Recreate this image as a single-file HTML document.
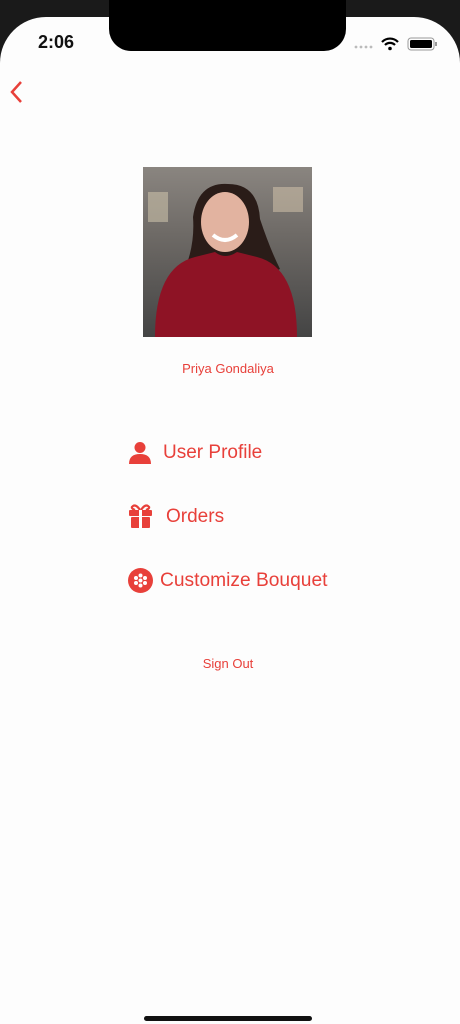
<!DOCTYPE html>
<html><head><meta charset="utf-8"><style>
html,body{margin:0;padding:0;height:1024px;overflow:hidden}
body{width:460px;height:1024px;background:#1a1a1a;position:relative;overflow:hidden;font-family:"Liberation Sans",sans-serif}
.screen{position:absolute;left:0;width:460px;height:1007px;background:#fdfdfd;border-radius:46px 46px 0 0;top:17px}
.notch{position:absolute;left:109px;top:0;width:237px;height:51px;background:#000;border-radius:0 0 22px 22px}
.time{position:absolute;left:38px;top:32px;font-size:18px;font-weight:bold;color:#111}
.t{position:absolute;color:#e8403a;white-space:nowrap}
</style></head><body>
<div class="screen"></div>
<div class="notch"></div>
<div class="time">2:06</div>
<svg style="position:absolute;left:354px;top:36px" width="84" height="16">
<g fill="#bbb"><circle cx="2" cy="11" r="1.4"/><circle cx="7" cy="11" r="1.4"/><circle cx="12" cy="11" r="1.4"/><circle cx="17" cy="11" r="1.4"/></g>
<path d="M28 6a11 11 0 0 1 16 0M31 9a7 7 0 0 1 10 0" stroke="#000" stroke-width="2.2" fill="none"/><circle cx="36" cy="12.5" r="1.8"/>
<rect x="54" y="2" width="26" height="12" rx="3" fill="none" stroke="#999" stroke-width="1"/>
<rect x="56" y="4" width="22" height="8" rx="1.5" fill="#000"/><rect x="81" y="6" width="2" height="4" fill="#999"/>
</svg>
<svg style="position:absolute;left:8px;top:80px" width="16" height="24"><path d="M13 2L4 12l9 10" stroke="#e8403a" stroke-width="2.5" fill="none"/></svg>
<svg style="position:absolute;left:143px;top:167px" width="169" height="170">
<defs><linearGradient id="bg" x1="0" y1="0" x2="0" y2="1"><stop offset="0" stop-color="#8a8580"/><stop offset=".4" stop-color="#6e6a66"/><stop offset="1" stop-color="#444"/></linearGradient></defs>
<rect width="169" height="170" fill="url(#bg)"/>
<rect x="5" y="25" width="20" height="30" fill="#c9bfa9" opacity=".6"/>
<rect x="130" y="20" width="30" height="25" fill="#d9c9b0" opacity=".5"/>
<path d="M50 50q5-35 35-33q30 0 32 35q10 30 20 50l-20 10l-60 0l-15-10q10-25 8-52z" fill="#2a1c18"/>
<ellipse cx="82" cy="55" rx="24" ry="30" fill="#e2b3a0"/>
<path d="M70 68q12 10 24 0" stroke="#fff" stroke-width="4" fill="none"/>
<path d="M12 170q0-70 40-80l20-5q10 8 22 0l20 5q40 10 40 80z" fill="#8e1325"/>
</svg>
<div class="t" style="left:0;width:456px;text-align:center;top:361px;font-size:13px">Priya Gondaliya</div>
<svg style="position:absolute;left:128px;top:441px" width="24" height="24" fill="#e8403a"><circle cx="12" cy="6.5" r="5.5"/><path d="M1 23q0-10 11-10t11 10z"/></svg>
<div class="t" style="left:163px;top:442px;font-size:19px">User Profile</div>
<svg style="position:absolute;left:128px;top:503px" width="25" height="26" fill="#e8403a"><path d="M12 7q-4-6-7-4t2 4M13 7q4-6 7-4t-2 4" stroke="#e8403a" stroke-width="2.2" fill="none"/><rect x="1" y="7" width="23" height="6" rx="1"/><rect x="3" y="14" width="19" height="11" rx="1"/><rect x="11" y="7" width="3" height="18" fill="#fff"/></svg>
<div class="t" style="left:166px;top:506px;font-size:19px">Orders</div>
<svg style="position:absolute;left:128px;top:568px" width="25" height="25"><circle cx="12.5" cy="12.5" r="12.5" fill="#e8403a"/><g fill="#fff"><circle cx="12.5" cy="12.5" r="2"/><circle cx="12.5" cy="7.5" r="2"/><circle cx="12.5" cy="17.5" r="2"/><circle cx="8" cy="10" r="2"/><circle cx="17" cy="10" r="2"/><circle cx="8" cy="15" r="2"/><circle cx="17" cy="15" r="2"/></g></svg>
<div class="t" style="left:160px;top:570px;font-size:19.2px">Customize Bouquet</div>
<div class="t" style="left:0;width:456px;text-align:center;top:656px;font-size:13px">Sign Out</div>
<div style="position:absolute;left:144px;top:1016px;width:168px;height:5px;border-radius:3px;background:#111"></div>
</body></html>
